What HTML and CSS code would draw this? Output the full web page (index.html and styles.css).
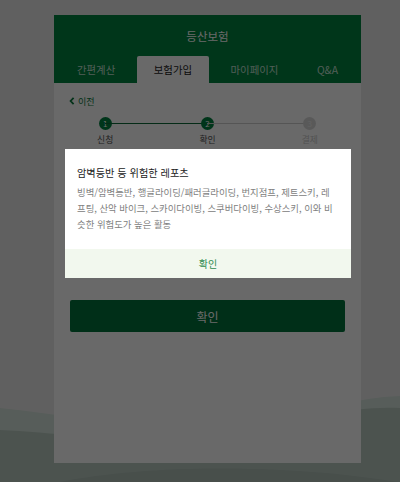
FILE: index.html
```html
<!DOCTYPE html>
<html lang="ko">
<head>
<meta charset="utf-8">
<title>등산보험</title>
<link rel="stylesheet" href="styles.css">
</head>
<body>
<svg class="waves" viewBox="0 0 400 482" preserveAspectRatio="none" aria-hidden="true">
  <path d="M0 408 C 60 414, 120 425, 200 440 C 260 452, 300 400, 400 396 L400 482 L0 482 Z" fill="#d3e2da"/>
  <path d="M0 430 C 50 432, 110 440, 180 446 C 250 452, 300 404, 400 408 L400 482 L0 482 Z" fill="#b9cac1"/>
  <path d="M60 482 C 120 470, 200 466, 280 470 C 330 472, 370 478, 400 482 Z" fill="#aebfb6"/>
</svg>

<div class="card">
  <header class="header">
    <h1 class="title">등산보험</h1>
    <nav class="tabs">
      <span class="tab">간편계산</span>
      <span class="tab active">보험가입</span>
      <span class="tab">마이페이지</span>
      <span class="tab">Q&amp;A</span>
    </nav>
  </header>

  <main class="content">
    <a class="back">
      <svg class="chev" viewBox="0 0 6 8"><polyline points="4.6,0.8 1.6,4 4.6,7.2" fill="none" stroke="#0a7a3e" stroke-width="1.8"/></svg>
      <span>이전</span>
    </a>

    <div class="stepper">
      <div class="step done">
        <span class="dot">1</span>
        <span class="label">신청</span>
      </div>
      <div class="step done current">
        <span class="dot">2</span>
        <span class="label">확인</span>
      </div>
      <div class="step todo">
        <span class="dot">3</span>
        <span class="label">결제</span>
      </div>
    </div>

    <button class="primary">확인</button>
  </main>

  <div class="modal">
    <div class="modal-body">
      <h2 class="modal-title">암벽등반 등 위험한 레포츠</h2>
      <p class="modal-text">빙벽/암벽등반, 행글라이딩/패러글라이딩, 번지점프, 제트스키, 레프팅, 산악 바이크, 스카이다이빙, 스쿠버다이빙, 수상스키, 이와 비슷한 위험도가 높은 활동</p>
    </div>
    <div class="modal-foot">확인</div>
  </div>
</div>

<div class="backdrop"></div>
</body>
</html>
```

FILE: styles.css
```css
html, body {
  margin: 0;
  padding: 0;
  height: 100%;
}

body {
  background: #eaeaea;
  font-family: "Noto Sans CJK KR", "Noto Sans", sans-serif;
  overflow: hidden;
  position: relative;
}

.waves {
  position: absolute;
  left: 0;
  top: 0;
  width: 400px;
  height: 482px;
}

.card {
  position: relative;
  width: 307px;
  height: 448px;
  margin: 15px 0 0 54px;
  background: #ffffff;
}

.header {
  background: #008440;
}

.title {
  margin: 0;
  padding: 13px 0 12px;
  font-size: 11.5px;
  line-height: 16px;
  font-weight: 400;
  color: #ffffff;
  text-align: center;
}

.tabs {
  display: flex;
  justify-content: space-between;
  padding: 0 6px;
  height: 27px;
}

.tab {
  display: flex;
  align-items: center;
  justify-content: center;
  padding: 0 17px;
  font-size: 10.4px;
  color: rgba(255, 255, 255, 0.78);
}

.tab.active {
  background: #ffffff;
  color: #222222;
  border-radius: 2px 2px 0 0;
}

.content {
  display: flex;
  flex-direction: column;
  padding: 11px 0 0;
}

.back {
  display: flex;
  align-items: center;
  gap: 3px;
  padding-left: 15px;
  height: 14px;
  font-size: 9px;
  color: #0a7a3e;
}

.chev {
  width: 6px;
  height: 8px;
}

.stepper {
  display: grid;
  grid-template-columns: repeat(3, 1fr);
  margin-top: 9px;
}

.step {
  position: relative;
  display: flex;
  flex-direction: column;
  align-items: center;
}

.step::before {
  content: "";
  position: absolute;
  top: 6px;
  left: -50%;
  width: 100%;
  height: 1px;
  background: #cfcfcf;
}

.step:first-child::before {
  display: none;
}

.step.done::before {
  background: #0b6a37;
}

.dot {
  position: relative;
  width: 13px;
  height: 13px;
  border-radius: 50%;
  background: #00803f;
  color: #ffffff;
  font-size: 8px;
  line-height: 13px;
  text-align: center;
}

.step.todo .dot {
  background: #d9d9d9;
  color: #eeeeee;
}

.label {
  margin-top: 3px;
  font-size: 8.8px;
  line-height: 14px;
  color: #555555;
}

.step.todo .label {
  color: #c8c8c8;
}

.primary {
  margin: 153px 16px 0;
  height: 32px;
  border: 0;
  border-radius: 2px;
  background: #00733a;
  color: #ffffff;
  font-family: inherit;
  font-size: 12px;
}

.backdrop {
  position: fixed;
  inset: 0;
  background: rgba(0, 0, 0, 0.59);
  z-index: 10;
}

.modal {
  position: absolute;
  z-index: 20;
  top: 134px;
  left: 11px;
  width: 286px;
  background: #ffffff;
}

.modal-body {
  padding: 17px 17px 17px 12px;
}

.modal-title {
  margin: 0 0 4px;
  font-size: 10.2px;
  line-height: 14px;
  font-weight: 400;
  color: #222222;
}

.modal-text {
  margin: 0;
  font-size: 9.4px;
  line-height: 16px;
  color: #808080;
}

.modal-foot {
  height: 29px;
  display: flex;
  align-items: center;
  justify-content: center;
  background: #f2f8ee;
  font-size: 10px;
  color: #2e8b4f;
}
```
